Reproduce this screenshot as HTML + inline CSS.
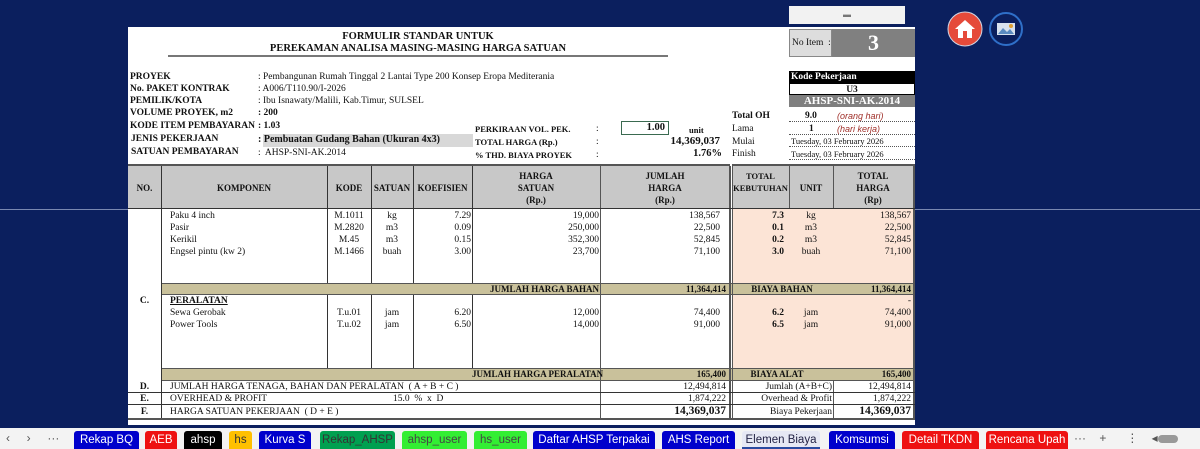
<!DOCTYPE html>
<html><head><meta charset="utf-8"><style>
*{margin:0;padding:0;box-sizing:border-box}
body{width:1200px;height:449px;background:#0b1f5e;position:relative;overflow:hidden;font-family:"Liberation Serif",serif;font-size:9.5px;color:#111}
.a{position:absolute;white-space:nowrap;line-height:12px}
.b{font-weight:bold}
.r{text-align:right}
.c{text-align:center}
.tab{position:absolute;top:431px;height:18px;line-height:18px;font-family:"Liberation Sans",sans-serif;font-size:11.5px;color:#fff;text-align:center;border-radius:3px 3px 0 0}
</style></head><body>
<div class="a" style="left:0;top:209px;width:128px;height:1px;background:#7a88b0"></div>
<div class="a" style="left:915px;top:209px;width:285px;height:1px;background:#7a88b0"></div>
<div class="a" style="left:789px;top:6px;width:116px;height:18px;background:#f2f2f2;text-align:center;font-size:8px;color:#777;line-height:18px">▬</div>
<div class="a" style="left:128px;top:27px;width:787px;height:398px;background:#fff"></div>
<div class="a b c" style="left:168px;top:31px;width:500px;font-size:10.5px">FORMULIR STANDAR UNTUK</div>
<div class="a b c" style="left:168px;top:43px;width:500px;font-size:10.5px">PEREKAMAN ANALISA MASING-MASING HARGA SATUAN</div>
<div class="a" style="left:168px;top:55px;width:500px;height:2px;background:#777"></div>
<div class="a" style="left:789px;top:29px;width:43px;height:28px;background:#ddd;border:1px solid #888;line-height:26px;padding-left:2px">No Item&nbsp; :</div>
<div class="a b c" style="left:832px;top:29px;width:83px;height:28px;background:#808080;color:#fff;font-size:22px;line-height:28px">3</div>
<div class="a b" style="left:130px;top:71px">PROYEK</div>
<div class="a b" style="left:130px;top:83px">No. PAKET KONTRAK</div>
<div class="a b" style="left:130px;top:95px">PEMILIK/KOTA</div>
<div class="a b" style="left:130px;top:107px">VOLUME PROYEK, m2</div>
<div class="a b" style="left:130px;top:120px">KODE ITEM PEMBAYARAN</div>
<div class="a b" style="left:131px;top:133px">JENIS PEKERJAAN</div>
<div class="a b" style="left:131px;top:146px">SATUAN PEMBAYARAN</div>
<div class="a" style="left:258px;top:71px">: Pembangunan Rumah Tinggal 2 Lantai Type 200 Konsep Eropa Mediterania</div>
<div class="a" style="left:258px;top:83px">: A006/T110.90/I-2026</div>
<div class="a" style="left:258px;top:95px">: Ibu Isnawaty/Malili, Kab.Timur, SULSEL</div>
<div class="a b" style="left:258px;top:107px">: 200</div>
<div class="a b" style="left:258px;top:120px">: 1.03</div>
<div class="a" style="left:263px;top:134px;width:210px;height:13px;background:#d8d8d8"></div>
<div class="a b" style="left:258px;top:134px;font-size:10px">: Pembuatan Gudang Bahan (Ukuran 4x3)</div>
<div class="a" style="left:258px;top:147px">:&nbsp; AHSP-SNI-AK.2014</div>
<div class="a b" style="left:475px;top:123px;font-size:8.5px">PERKIRAAN VOL. PEK.</div>
<div class="a b" style="left:475px;top:136px;font-size:8.5px">TOTAL HARGA (Rp.)</div>
<div class="a b" style="left:475px;top:149px;font-size:8.5px">% THD. BIAYA PROYEK</div>
<div class="a" style="left:596px;top:123px">:</div><div class="a" style="left:596px;top:136px">:</div><div class="a" style="left:596px;top:149px">:</div>
<div class="a b r" style="left:621px;top:121px;width:48px;height:14px;border:1.5px solid #3a6a50;padding-right:3px;font-size:10.5px;line-height:11px">1.00</div>
<div class="a b" style="left:689px;top:124px;font-size:8.5px">unit</div>
<div class="a b r" style="left:660px;top:135px;width:60px;font-size:11px">14,369,037</div>
<div class="a b r" style="left:660px;top:148px;width:62px;font-size:10.5px">1.76%</div>
<div class="a b" style="left:732px;top:110px">Total OH</div>
<div class="a" style="left:732px;top:123px">Lama</div>
<div class="a" style="left:732px;top:136px">Mulai</div>
<div class="a" style="left:732px;top:148px">Finish</div>
<div class="a b" style="left:789px;top:71px;width:126px;height:12px;background:#000;color:#fff;padding-left:2px">Kode Pekerjaan</div>
<div class="a b c" style="left:789px;top:83px;width:126px;height:12px;border:1px solid #000">U3</div>
<div class="a b c" style="left:789px;top:95px;width:126px;height:12px;background:#7f7f7f;color:#fff;font-size:11px">AHSP-SNI-AK.2014</div>
<div class="a" style="left:789px;top:110px;width:126px;height:12px;border-bottom:1px dotted #555"><span class="b" style="position:absolute;left:16px">9.0</span><i style="position:absolute;left:48px;color:#a0302a;font-family:'Liberation Sans';font-size:9px">(orang hari)</i></div>
<div class="a" style="left:789px;top:123px;width:126px;height:12px;border-bottom:1px dotted #555"><span class="b" style="position:absolute;left:20px">1</span><i style="position:absolute;left:48px;color:#a0302a;font-family:'Liberation Sans';font-size:9px">(hari kerja)</i></div>
<div class="a" style="left:789px;top:135px;width:126px;height:12px;border-bottom:1px dotted #555;font-size:8.5px;padding-left:2px">Tuesday, 03 February 2026</div>
<div class="a" style="left:789px;top:148px;width:126px;height:12px;border-bottom:1px dotted #555;font-size:8.5px;padding-left:2px">Tuesday, 03 February 2026</div>
<div class="a" style="left:128px;top:164px;width:602px;height:2px;background:#555"></div>
<div class="a" style="left:732px;top:164px;width:183px;height:2px;background:#555"></div>
<div class="a" style="left:128px;top:166px;width:602px;height:43px;background:#c8c8c8"></div>
<div class="a" style="left:732px;top:166px;width:183px;height:43px;background:#c8c8c8"></div>
<div class="a" style="left:732px;top:209px;width:183px;height:74px;background:#fce4d6"></div>
<div class="a" style="left:732px;top:295px;width:183px;height:73px;background:#fce4d6"></div>
<div class="a" style="left:161px;top:283px;width:754px;height:12px;background:#c9c19b;border-top:1px solid #555;border-bottom:1px solid #555"></div>
<div class="a" style="left:161px;top:368px;width:754px;height:13px;background:#c9c19b;border-top:1px solid #555;border-bottom:1px solid #555"></div>
<div class="a" style="left:161px;top:166px;width:1px;height:253px;background:#333"></div>
<div class="a" style="left:327px;top:166px;width:1px;height:117px;background:#333"></div>
<div class="a" style="left:327px;top:295px;width:1px;height:73px;background:#333"></div>
<div class="a" style="left:371px;top:166px;width:1px;height:117px;background:#333"></div>
<div class="a" style="left:371px;top:295px;width:1px;height:73px;background:#333"></div>
<div class="a" style="left:413px;top:166px;width:1px;height:117px;background:#333"></div>
<div class="a" style="left:413px;top:295px;width:1px;height:73px;background:#333"></div>
<div class="a" style="left:472px;top:166px;width:1px;height:117px;background:#333"></div>
<div class="a" style="left:472px;top:295px;width:1px;height:73px;background:#333"></div>
<div class="a" style="left:600px;top:166px;width:1px;height:253px;background:#555"></div>
<div class="a" style="left:729px;top:166px;width:2px;height:253px;background:#555"></div>
<div class="a" style="left:732px;top:166px;width:1px;height:253px;background:#555"></div>
<div class="a" style="left:789px;top:166px;width:1px;height:43px;background:#555"></div>
<div class="a" style="left:833px;top:166px;width:1px;height:43px;background:#555"></div>
<div class="a" style="left:833px;top:381px;width:1px;height:38px;background:#555"></div>
<div class="a" style="left:913px;top:166px;width:2px;height:253px;background:#555"></div>
<div class="a" style="left:128px;top:208px;width:787px;height:1px;background:#333"></div>
<div class="a" style="left:128px;top:392px;width:787px;height:1px;background:#333"></div>
<div class="a" style="left:128px;top:404px;width:787px;height:1px;background:#333"></div>
<div class="a" style="left:128px;top:418px;width:787px;height:2px;background:#555"></div>
<div class="a b c" style="left:128px;top:182px;width:33px;font-size:9px">NO.</div>
<div class="a b c" style="left:161px;top:182px;width:166px;font-size:9px">KOMPONEN</div>
<div class="a b c" style="left:327px;top:182px;width:44px;font-size:9px">KODE</div>
<div class="a b c" style="left:371px;top:182px;width:42px;font-size:9px">SATUAN</div>
<div class="a b c" style="left:413px;top:182px;width:59px;font-size:9px">KOEFISIEN</div>
<div class="a b c" style="left:472px;top:170px;width:128px;font-size:9px">HARGA<br>SATUAN<br>(Rp.)</div>
<div class="a b c" style="left:600px;top:170px;width:130px;font-size:9px">JUMLAH<br>HARGA<br>(Rp.)</div>
<div class="a b c" style="left:732px;top:170px;width:57px;font-size:8.5px">TOTAL<br>KEBUTUHAN</div>
<div class="a b c" style="left:789px;top:182px;width:44px;font-size:9px">UNIT</div>
<div class="a b c" style="left:833px;top:170px;width:80px;font-size:9px">TOTAL<br>HARGA<br>(Rp)</div>
<div class="a" style="left:170px;top:210px">Paku 4 inch<br>Pasir<br>Kerikil<br>Engsel pintu (kw 2)</div>
<div class="a c" style="left:327px;top:210px;width:44px">M.1011<br>M.2820<br>M.45<br>M.1466</div>
<div class="a c" style="left:371px;top:210px;width:42px">kg<br>m3<br>m3<br>buah</div>
<div class="a r" style="left:413px;top:210px;width:58px">7.29<br>0.09<br>0.15<br>3.00</div>
<div class="a r" style="left:472px;top:210px;width:127px">19,000<br>250,000<br>352,300<br>23,700</div>
<div class="a r" style="left:600px;top:210px;width:120px">138,567<br>22,500<br>52,845<br>71,100</div>
<div class="a b r" style="left:732px;top:210px;width:52px">7.3<br>0.1<br>0.2<br>3.0</div>
<div class="a c" style="left:789px;top:210px;width:44px">kg<br>m3<br>m3<br>buah</div>
<div class="a r" style="left:833px;top:210px;width:78px">138,567<br>22,500<br>52,845<br>71,100</div>
<div class="a b r" style="left:472px;top:283px;width:127px;font-size:9px">JUMLAH HARGA BAHAN</div>
<div class="a b r" style="left:600px;top:283px;width:126px;font-size:9px">11,364,414</div>
<div class="a b c" style="left:732px;top:283px;width:100px;font-size:9px">BIAYA BAHAN</div>
<div class="a b r" style="left:833px;top:283px;width:78px;font-size:9px">11,364,414</div>
<div class="a b c" style="left:128px;top:295px;width:33px">C.</div>
<div class="a b" style="left:170px;top:295px;text-decoration:underline">PERALATAN</div>
<div class="a r" style="left:833px;top:295px;width:78px">-</div>
<div class="a" style="left:170px;top:307px">Sewa Gerobak<br>Power Tools</div>
<div class="a c" style="left:327px;top:307px;width:44px">T.u.01<br>T.u.02</div>
<div class="a c" style="left:371px;top:307px;width:42px">jam<br>jam</div>
<div class="a r" style="left:413px;top:307px;width:58px">6.20<br>6.50</div>
<div class="a r" style="left:472px;top:307px;width:127px">12,000<br>14,000</div>
<div class="a r" style="left:600px;top:307px;width:120px">74,400<br>91,000</div>
<div class="a b r" style="left:732px;top:307px;width:52px">6.2<br>6.5</div>
<div class="a c" style="left:789px;top:307px;width:44px">jam<br>jam</div>
<div class="a r" style="left:833px;top:307px;width:78px">74,400<br>91,000</div>
<div class="a b r" style="left:472px;top:368px;width:127px;font-size:9px;padding-right:50px">JUMLAH HARGA PERALATAN</div>
<div class="a b r" style="left:600px;top:368px;width:126px;font-size:9px">165,400</div>
<div class="a b c" style="left:732px;top:368px;width:90px;font-size:9px">BIAYA ALAT</div>
<div class="a b r" style="left:833px;top:368px;width:78px;font-size:9px">165,400</div>
<div class="a b c" style="left:128px;top:381px;width:33px">D.</div>
<div class="a b c" style="left:128px;top:393px;width:33px">E.</div>
<div class="a b c" style="left:128px;top:406px;width:33px">F.</div>
<div class="a" style="left:170px;top:381px">JUMLAH HARGA TENAGA, BAHAN DAN PERALATAN&nbsp; ( A + B + C )</div>
<div class="a" style="left:170px;top:393px">OVERHEAD &amp; PROFIT</div>
<div class="a" style="left:393px;top:393px">15.0&nbsp; %&nbsp; x&nbsp; D</div>
<div class="a" style="left:170px;top:406px">HARGA SATUAN PEKERJAAN&nbsp; ( D + E )</div>
<div class="a r" style="left:600px;top:381px;width:126px">12,494,814</div>
<div class="a r" style="left:600px;top:393px;width:126px">1,874,222</div>
<div class="a b r" style="left:600px;top:405px;width:126px;font-size:11.5px;line-height:13px">14,369,037</div>
<div class="a r" style="left:732px;top:381px;width:100px">Jumlah (A+B+C)</div>
<div class="a r" style="left:732px;top:393px;width:100px">Overhead &amp; Profit</div>
<div class="a r" style="left:732px;top:406px;width:100px">Biaya Pekerjaan</div>
<div class="a r" style="left:833px;top:381px;width:78px">12,494,814</div>
<div class="a r" style="left:833px;top:393px;width:78px">1,874,222</div>
<div class="a b r" style="left:833px;top:405px;width:78px;font-size:11.5px;line-height:13px">14,369,037</div>
<svg class="a" style="left:946px;top:10px" width="80" height="38" viewBox="0 0 80 38">
<circle cx="19" cy="19" r="17" fill="#e54a3a" stroke="#d0d8e8" stroke-width="1"/>
<path d="M9 19 L19 10 L29 19 Z" fill="#fff"/><rect x="12" y="18" width="14" height="10" fill="#fff"/><rect x="17" y="21" width="4" height="7" fill="#e54a3a"/>
<circle cx="60" cy="19" r="16" fill="#0b1f5e" stroke="#2f6fc8" stroke-width="2"/>
<rect x="51" y="13" width="18" height="12" fill="#d8e2ee"/><path d="M52 24 L57 18 L61 22 L64 19 L68 24Z" fill="#5a8ac0"/><circle cx="65" cy="16" r="2" fill="#e0a030"/>
</svg>
<div class="a" style="left:0;top:428px;width:1200px;height:21px;background:#f3f3f3"></div>
<div class="a" style="left:6px;top:432px;font-family:'Liberation Sans';font-size:12px;color:#555">‹&nbsp;&nbsp;&nbsp;&nbsp;&nbsp;›&nbsp;&nbsp;&nbsp;&nbsp;&nbsp;···</div>
<div class="tab" style="left:74px;width:65px;background:#0000cc">Rekap BQ</div>
<div class="tab" style="left:145px;width:32px;background:#ee1111">AEB</div>
<div class="tab" style="left:184px;width:38px;background:#000">ahsp</div>
<div class="tab" style="left:229px;width:23px;background:#ffc000;color:#333">hs</div>
<div class="tab" style="left:259px;width:52px;background:#0000cc">Kurva S</div>
<div class="tab" style="left:320px;width:75px;background:#00a050;color:#333">Rekap_AHSP</div>
<div class="tab" style="left:402px;width:65px;background:#33ee33;color:#444">ahsp_user</div>
<div class="tab" style="left:474px;width:53px;background:#33ee33;color:#444">hs_user</div>
<div class="tab" style="left:533px;width:122px;background:#0000cc">Daftar AHSP Terpakai</div>
<div class="tab" style="left:662px;width:73px;background:#0000cc">AHS Report</div>
<div class="tab" style="left:742px;width:78px;background:#e6e8f4;color:#224;border-bottom:2px solid #2a4aa0">Elemen Biaya</div>
<div class="tab" style="left:829px;width:66px;background:#0000cc">Komsumsi</div>
<div class="tab" style="left:902px;width:77px;background:#ee1111">Detail TKDN</div>
<div class="tab" style="left:986px;width:82px;background:#ee1111">Rencana Upah</div>
<div class="a" style="left:1074px;top:432px;font-family:'Liberation Sans';font-size:12px;color:#555">···&nbsp;&nbsp;&nbsp;&nbsp;+&nbsp;&nbsp;&nbsp;&nbsp;&nbsp;&nbsp;⋮&nbsp;&nbsp;&nbsp;&nbsp;◂<span style="display:inline-block;width:20px;height:8px;background:#999;border-radius:4px;vertical-align:middle"></span>&nbsp;&nbsp;&nbsp;&nbsp;&nbsp;&nbsp;&nbsp;▸</div>
</body></html>
